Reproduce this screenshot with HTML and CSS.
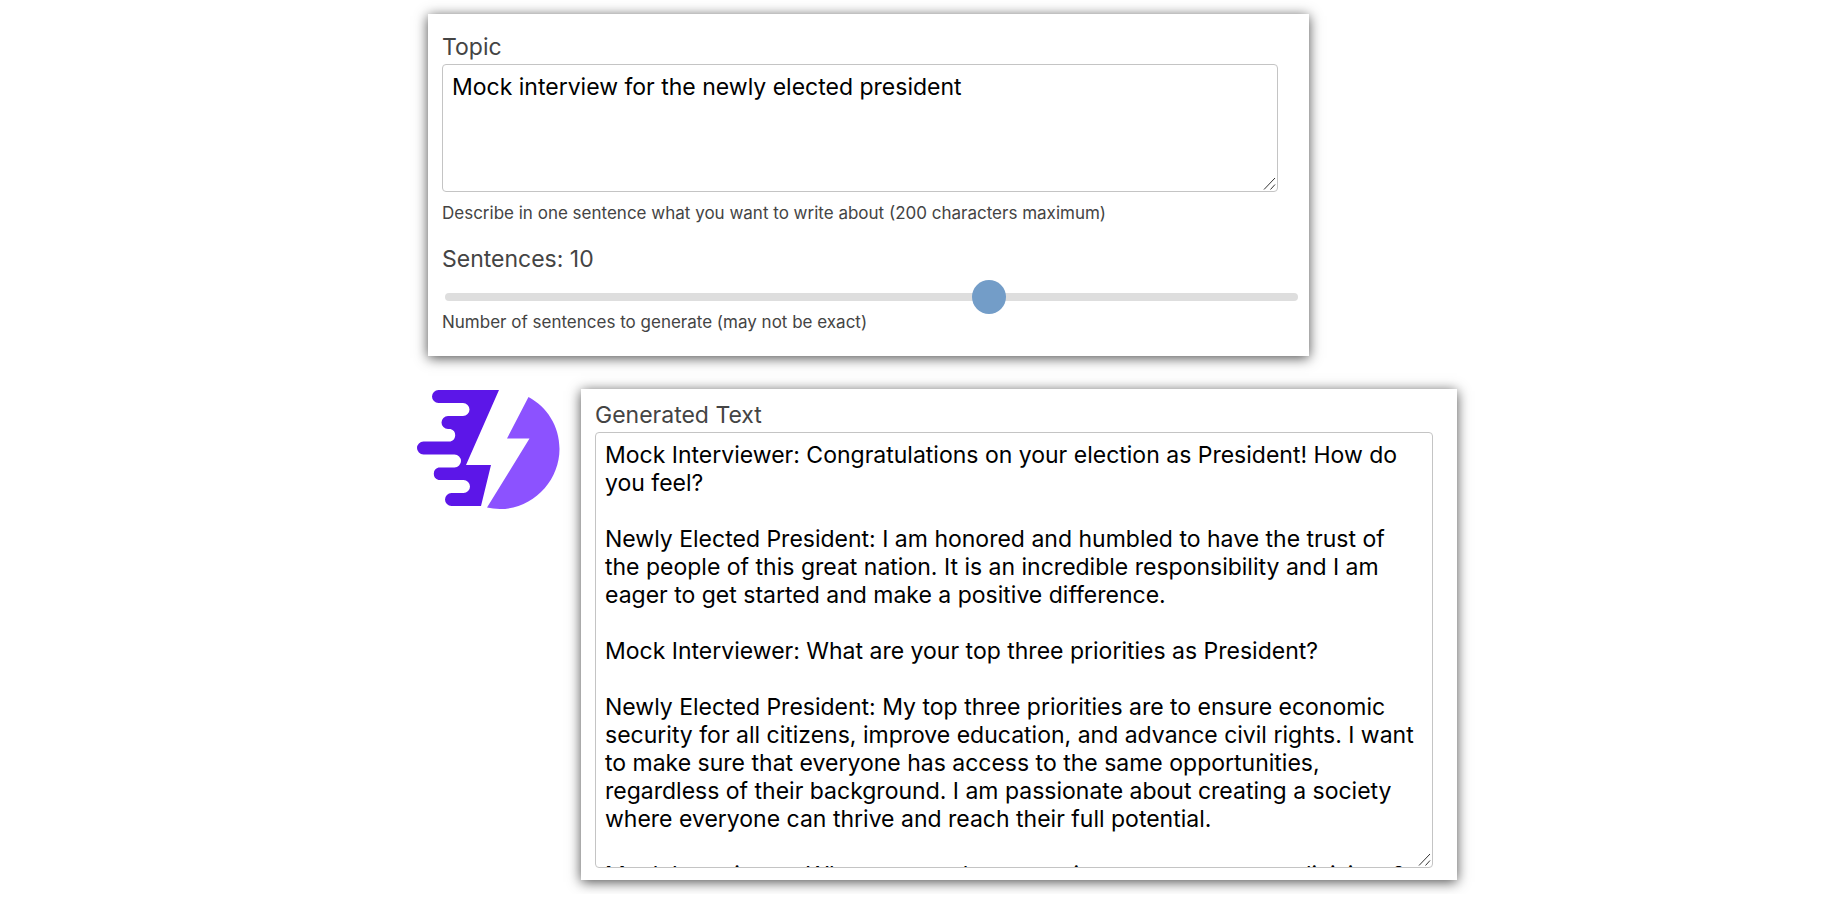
FILE: index.html
```html
<!DOCTYPE html>
<html lang="en">
<head>
  <meta charset="UTF-8" />
  <meta name="viewport" content="width=device-width, initial-scale=1.0"/>
  <title>Text Generator</title>
  <link rel="stylesheet" href="styles.css">
</head>
<body>
  <main class="generator">
    <form class="panel prompt">
      <label for="topic">Topic</label>
      <textarea id="topic" class="topic" maxlength="200" spellcheck="false">Mock interview for the newly elected president</textarea>
      <p class="hint">Describe in one sentence what you want to write about (200 characters maximum)</p>

      <label for="sentences">Sentences: <output id="sentenceCount">10</output></label>
      <input type="range" id="sentences" min="1" max="15" value="10">
      <p class="hint">Number of sentences to generate (may not be exact)</p>
    </form>

    <div class="result">
      <svg class="logo" viewBox="0 0 144 120" role="img" aria-label="Logo">
        <path fill="#5c16e8" d="M82 1H21.500a6.500 6.500 0 0 0 0 13H46a6.500 6.500 0 0 1 0 13H31a6.500 6.500 0 0 0 0 13h2.500a6.500 6.500 0 0 1 0 12.500H6.500a6.500 6.500 0 0 0 0 13H37.500a6.500 6.500 0 0 1 0 13H21.500a6.500 6.500 0 0 0 0 12.500H46.500a6.500 6.500 0 0 1 0 13H34.500a6.500 6.500 0 0 0 0 13H64L74 76H49Z"/>
        <path fill="#8c52ff" d="M111.500 8C130 18 142.500 37 142.500 60C142.500 92 116 120 83 120C78 120 74 119 70 118.500L112.500 49.500H90Z"/>
      </svg>

      <div class="panel output">
        <label for="generated">Generated Text</label>
        <textarea id="generated" class="generated" spellcheck="false">Mock Interviewer: Congratulations on your election as President! How do you feel?

Newly Elected President: I am honored and humbled to have the trust of the people of this great nation. It is an incredible responsibility and I am eager to get started and make a positive difference.

Mock Interviewer: What are your top three priorities as President?

Newly Elected President: My top three priorities are to ensure economic security for all citizens, improve education, and advance civil rights. I want to make sure that everyone has access to the same opportunities, regardless of their background. I am passionate about creating a society where everyone can thrive and reach their full potential.

Mock Interviewer: What can we do as a nation to overcome our divisions?</textarea>
      </div>
    </div>
  </main>

  <script>
    const sentences = document.getElementById("sentences");
    const sentenceCount = document.getElementById("sentenceCount");

    sentences.addEventListener("input", () => {
      sentenceCount.textContent = sentences.value;
    });
  </script>
</body>
</html>
```
FILE: styles.css
```css
* {
  box-sizing: border-box;
}

body {
  font-family: Inter, sans-serif;
  font-size: 23px;
  line-height: 28px;
  background-color: #fff;
  color: #444;
  margin: 0;
}

.generator {
  max-width: 1074px;
  margin: 0 auto;
  padding: 14px 0 14px 34px;
}

.panel {
  background: #fff;
  padding: 12px 14px;
  box-shadow: 0 2px 12px rgba(0, 0, 0, 0.7);
}

.prompt {
  max-width: 881px;
  margin-left: 11px;
  padding: 19px 10px 24px 14px;
}

label {
  display: block;
  margin-bottom: 3px;
}

textarea {
  display: block;
  font: inherit;
  color: #000;
  background: #fff;
  border: 1px solid #c4c4c4;
  border-radius: 4px;
  padding: 8px 9px;
  resize: both;
}

textarea::-webkit-resizer {
  background: url("data:image/svg+xml,%3Csvg xmlns='http://www.w3.org/2000/svg' width='15' height='15'%3E%3Cpath d='M2 13.500L13 2M8.500 13.500L13 8.500' stroke='%23333' fill='none'/%3E%3C/svg%3E") no-repeat right bottom;
}

.topic {
  width: 836px;
  max-width: 100%;
  height: 128px;
}

.hint {
  font-size: 17px;
  line-height: 20px;
  margin: 11px 0 22px;
}

input[type="range"] {
  display: block;
  appearance: none;
  width: calc(100% - 4px);
  height: 8px;
  margin: 20px 1px 0 3px;
  border-radius: 4px;
  background: #dedede;
}

input[type="range"]::-webkit-slider-thumb {
  appearance: none;
  width: 34px;
  height: 34px;
  border-radius: 50%;
  background: #739dc8;
  cursor: pointer;
}

input[type="range"] + .hint {
  margin-bottom: 0;
}

.result {
  display: flex;
  align-items: flex-start;
  gap: 20px;
  margin-top: 33px;
}

.logo {
  width: 144px;
  height: 120px;
  flex: none;
}

.output {
  flex: 1;
}

.generated {
  width: 838px;
  max-width: 100%;
  height: 436px;
  overflow: hidden;
}
```
